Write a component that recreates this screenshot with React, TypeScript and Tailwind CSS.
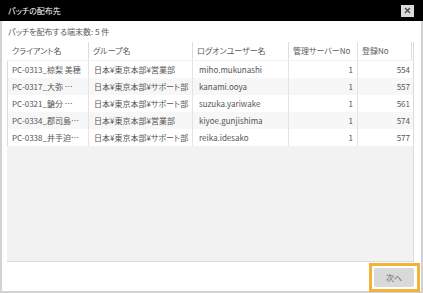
import React from "react";

const columns = [
  { label: "クライアント名", width: "w-[81px]" },
  { label: "グループ名", width: "w-[104px]" },
  { label: "ログオンユーザー名", width: "w-[96px]" },
  { label: "管理サーバーNo", width: "w-[69px]" },
  { label: "登録No", width: "w-[54px]" },
];

const rows = [
  { client: "PC-0313_椋梨 美穂", group: "日本¥東京本部¥営業部", user: "miho.mukunashi", server: 1, no: 554 },
  { client: "PC-0317_大弥 …", group: "日本¥東京本部¥サポート部", user: "kanami.ooya", server: 1, no: 557 },
  { client: "PC-0321_鎗分 …", group: "日本¥東京本部¥サポート部", user: "suzuka.yariwake", server: 1, no: 561 },
  { client: "PC-0334_郡司島…", group: "日本¥東京本部¥営業部", user: "kiyoe.gunjishima", server: 1, no: 574 },
  { client: "PC-0338_井手迫…", group: "日本¥東京本部¥サポート部", user: "reika.idesako", server: 1, no: 577 },
];

const App: React.FC = () => {
  return (
    <div className="w-[423px] h-[293px] flex flex-col bg-white text-[8px] leading-[12px] [font-family:'Noto_Sans_CJK_JP','Noto_Sans',sans-serif] [font-feature-settings:'palt']">
      {/* Title bar */}
      <div className="h-[21px] shrink-0 bg-black flex items-center justify-between pl-[8px] pr-[9px]">
        <span className="text-white">パッチの配布先</span>
        <button className="w-[13px] h-[12px] bg-[#dadada] flex items-center justify-center">
          <svg width="7" height="7" viewBox="0 0 7 7">
            <path d="M1 1L6 6M6 1L1 6" stroke="#4a4a4a" strokeWidth="1.4" />
          </svg>
        </button>
      </div>

      {/* Body */}
      <div className="flex-1 flex flex-col border-x-2 border-b-2 border-[#d2d2d2] pl-[5px] pr-[7px]">
        <div className="pt-[5px] pl-[1px] text-[#5a5a5a]">パッチを配布する端末数: 5 件</div>

        <div className="mt-[4px] h-[220px] shrink-0 bg-[#f2f2f2] border-r border-b border-[#dcdcdc] flex flex-col">
          {/* Header */}
          <div className="h-[18px] bg-white flex pl-px text-[#5a5a5a]">
            {columns.map((col) => (
              <div
                key={col.label}
                className={`${col.width} h-full border-r border-[#dedede] pl-[4px] flex items-center whitespace-nowrap overflow-hidden`}
              >
                {col.label}
              </div>
            ))}
          </div>

          {/* Rows */}
          <div className="mt-px flex flex-col border-l border-[#dcdcdc]">
            {rows.map((row, i) => (
              <div
                key={row.user}
                className={`h-[17px] flex text-[#555] ${i % 2 === 1 ? "bg-[#f7f7f7]" : "bg-white"}`}
              >
                <div className="w-[81px] border-r border-[#e4e4e4] pl-[4px] flex items-center whitespace-nowrap overflow-hidden">
                  {row.client}
                </div>
                <div className="w-[104px] border-r border-[#e4e4e4] pl-[5px] flex items-center whitespace-nowrap overflow-hidden">
                  {row.group}
                </div>
                <div className="w-[96px] border-r border-[#e4e4e4] pl-[6px] flex items-center whitespace-nowrap overflow-hidden">
                  {row.user}
                </div>
                <div className="w-[69px] border-r border-[#e4e4e4] pr-[4px] flex items-center justify-end">
                  {row.server}
                </div>
                <div className="w-[54px] pr-[2px] flex items-center justify-end">{row.no}</div>
              </div>
            ))}
          </div>
        </div>

        {/* Footer */}
        <div className="flex justify-end pt-[6px]">
          <div className="relative">
            <button className="w-[40px] h-[19px] rounded-[2px] bg-[#d9d9d9] text-[#6a6a6a] flex items-center justify-center">
              次へ
            </button>
            <span className="absolute -top-[5px] -bottom-[5px] -left-[5px] -right-[6px] border-[3px] border-[#f5b23a] pointer-events-none" />
          </div>
        </div>
      </div>
    </div>
  );
};

export default App;
